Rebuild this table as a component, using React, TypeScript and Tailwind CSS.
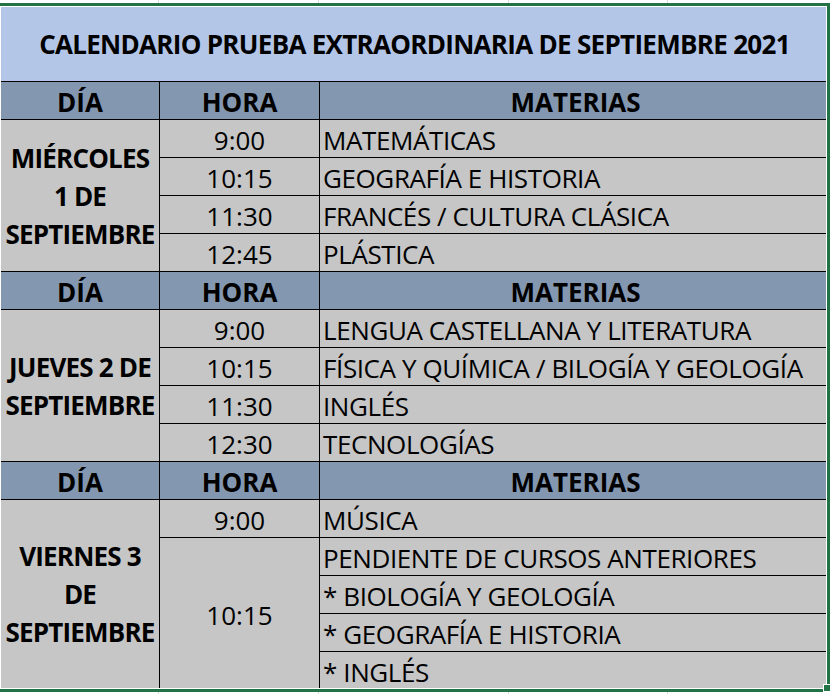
import React from "react";

const font = { fontFamily: '"Open Sans", "Noto Sans", sans-serif' };

function Head() {
  return (
    <>
      <div className="bg-[#8497b0] flex items-center justify-center font-bold pt-[4px]">DÍA</div>
      <div className="bg-[#8497b0] flex items-center justify-center font-bold pt-[4px]">HORA</div>
      <div className="bg-[#8497b0] flex items-center justify-center font-bold pt-[4px] pl-[5px]">MATERIAS</div>
    </>
  );
}

function Hour({ t, span }: { t: string; span?: string }) {
  return <div className={`bg-[#c6c6c6] flex items-center justify-center pt-[4px] ${span ?? ""}`}>{t}</div>;
}

function Subj({ t }: { t: string }) {
  return <div className="bg-[#c6c6c6] flex items-center pl-[3px] pt-[4px] whitespace-nowrap tracking-[-0.4px]">{t}</div>;
}

function Day({ lines, span }: { lines: string[]; span: string }) {
  return (
    <div className={`bg-[#c6c6c6] flex flex-col items-center justify-center font-bold tracking-[-0.8px] leading-[38px] ${span}`}>
      {lines.map((l) => (
        <div key={l}>{l}</div>
      ))}
    </div>
  );
}

function GridStrip({ h }: { h: string }) {
  return (
    <div className={`${h} w-full flex`}>
      <div className="w-[159px] border-r border-[#d9d9d9]" />
      <div className="w-[160px] border-r border-[#d9d9d9]" />
      <div className="w-[190px] border-r border-[#d9d9d9]" />
      <div className="w-[159px] border-r border-[#d9d9d9]" />
    </div>
  );
}

export default function App() {
  return (
    <div className="w-[831px] h-[694px] bg-white overflow-hidden relative text-black text-[26px]" style={font}>
      <GridStrip h="h-[3px]" />
      <div className="ml-[-3px] w-[833px] border-[3px] border-[#217346] p-px">
        <div className="grid grid-cols-[158px_159px_506px] grid-rows-[74px_repeat(15,37px)_36px] gap-px bg-black">
          <div className="col-span-3 bg-[#b4c6e7] flex items-center justify-center font-bold tracking-[-0.7px] pl-[2px]">
            CALENDARIO PRUEBA EXTRAORDINARIA DE SEPTIEMBRE 2021
          </div>
          <Head />
          <Day lines={["MIÉRCOLES", "1 DE", "SEPTIEMBRE"]} span="row-span-4" />
          <Hour t="9:00" />
          <Subj t="MATEMÁTICAS" />
          <Hour t="10:15" />
          <Subj t="GEOGRAFÍA E HISTORIA" />
          <Hour t="11:30" />
          <Subj t="FRANCÉS / CULTURA CLÁSICA" />
          <Hour t="12:45" />
          <Subj t="PLÁSTICA" />
          <Head />
          <Day lines={["JUEVES 2 DE", "SEPTIEMBRE"]} span="row-span-4" />
          <Hour t="9:00" />
          <Subj t="LENGUA CASTELLANA Y LITERATURA" />
          <Hour t="10:15" />
          <Subj t="FÍSICA Y QUÍMICA / BILOGÍA Y GEOLOGÍA" />
          <Hour t="11:30" />
          <Subj t="INGLÉS" />
          <Hour t="12:30" />
          <Subj t="TECNOLOGÍAS" />
          <Head />
          <Day lines={["VIERNES 3", "DE", "SEPTIEMBRE"]} span="row-span-5" />
          <Hour t="9:00" />
          <Subj t="MÚSICA" />
          <Hour t="10:15" span="row-span-4" />
          <Subj t="PENDIENTE DE CURSOS ANTERIORES" />
          <Subj t="* BIOLOGÍA Y GEOLOGÍA" />
          <Subj t="* GEOGRAFÍA E HISTORIA" />
          <Subj t="* INGLÉS" />
        </div>
      </div>
      <GridStrip h="h-[2px]" />
      <div className="absolute left-[823px] top-[684px] w-[8px] h-[8px] bg-[#217346] border border-white" />
    </div>
  );
}
